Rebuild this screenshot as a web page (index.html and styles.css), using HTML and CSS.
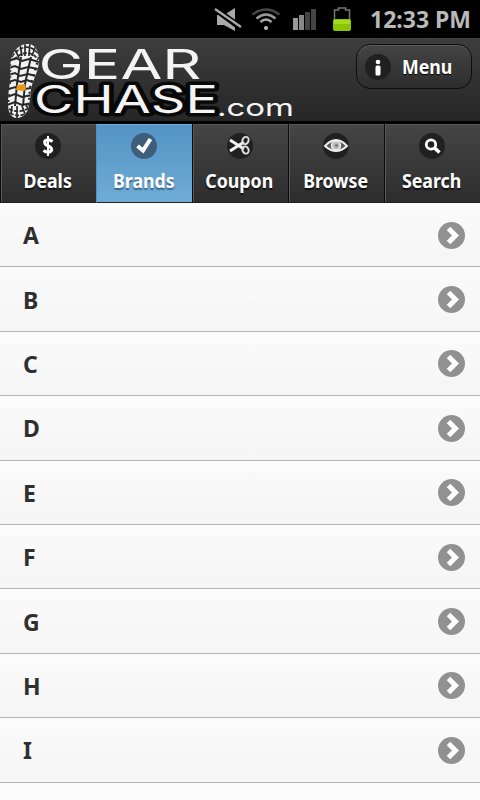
FILE: index.html
```html
<!DOCTYPE html>
<html lang="en">
<head>
    <meta charset="UTF-8">
    <meta name="viewport" content="width=device-width, initial-scale=1.0">
    <title>Brands - GearChase.com</title>
    <link rel="stylesheet" href="styles.css">
</head>
<body>
    <div class="status-bar">
        <svg class="status-icons" width="160" height="38" viewBox="0 0 160 38">
            <!-- muted speaker -->
            <g fill="#aaa">
                <path d="M17 15h7l11-7v23l-11-6h-7z"/>
                <path d="M14 8l27 20" stroke="#000" stroke-width="6"/>
                <path d="M15 9l26 18" stroke="#aaa" stroke-width="2.3"/>
            </g>
            <!-- wifi -->
            <g fill="none" stroke-width="2.4">
                <path d="M52.500 14.500q13.500-10 27 0" stroke="#484848"/>
                <path d="M56.500 18.500q9.500-8 19 0" stroke="#999"/>
                <path d="M60.500 22q5.500-5 11 0" stroke="#aaa"/>
                <circle cx="66" cy="28" r="2" fill="#bbb"/>
            </g>
            <!-- signal -->
            <path fill="#999" d="M93 18h5v12h-5z"/>
            <path fill="#888" d="M99 15h5v15h-5z"/>
            <path fill="#444" d="M105 12h5v18h-5zM111 9h5v21h-5z"/>
            <!-- battery -->
            <path d="M134.500 20V10h4V8h7v2h4v10" fill="none" stroke="#777" stroke-width="1.5"/>
            <rect x="133" y="19" width="18" height="12" rx="2" fill="#8bc400"/>
            <path d="M134 20h16v4h-16z" fill="#a3dc1b"/>
        </svg>
        <span class="clock">12:33 PM</span>
    </div>

    <div class="header">
        <svg class="logo" width="300" height="82" viewBox="0 39 300 82">
            <defs>
                <clipPath id="sole">
                    <path d="M27 44C34 43 39 50 39 60C39 69 35 76 32 85C30 91 31 97 29 105C28 113 23 118 17 118C11 118 8 112 8 104C8 95 9 89 10 82C11 73 9 65 12 56C15 49 20 44 27 44Z"/>
                </clipPath>
            </defs>
            <g clip-path="url(#sole)">
                <path fill="#f2f2f2" d="M6 42h36v78H6z"/>
                <g fill="none" stroke="#282828">
                    <path stroke-width="2" d="M9 61l7-3 6 3 7-2 10 3M9 68l6-2 6 3 7-2 10 2M8 75l7-2 5 3 8-2 8 2M8 82l7-2 6 2 6-2 8 3M8 89l8-2 8 2 8-1M7 97l8-3 7 3 10-2M7 105l8-3 7 3 10-2"/>
                    <path stroke-width="2" d="M21 57l-2 13-2 14-2 22M31 57l-3 13-3 14-2 22"/>
                    <path stroke-width="1.700" stroke-dasharray="4 1.500" d="M12 57q5-9 15-10 8 1 12 8M14 60q6-7 13-7 7 0 11 7M9 109q9 5 20-1M10 113q8 5 17 0"/>
                    <path stroke-width="1.700" d="M15 49l4 9M20 44l2 12M25 42v14M30 42l-1 14M36 45l-4 11M12 106l-1 8M17 106v12M22 106l3 8M26 105l3 5"/>
                    <path stroke-width="2.500" stroke-dasharray="2 4" d="M39 57l-9 31-1 18M10 58v22l-2 24"/>
                </g>
                <path fill="#e99a14" d="M17 85l8-1 1 5-2 2-8-1z"/>
            </g>
            <g class="logo-text">
                <text class="logo-outline" x="34" y="113" font-size="38.500" textLength="184" lengthAdjust="spacingAndGlyphs">CHASE</text>
                <text x="38.500" y="79" font-size="41" textLength="163" lengthAdjust="spacingAndGlyphs">GEAR</text>
                <text x="217" y="116" font-size="24" textLength="77" lengthAdjust="spacingAndGlyphs">.com</text>
            </g>
        </svg>
        <a class="menu-btn" href="#">
            <svg class="icon" width="26" height="26" viewBox="0 0 26 26">
                <circle cx="13" cy="13" r="13" fill="#202020"/>
                <circle cx="13" cy="8" r="2.300" fill="#fff"/>
                <rect x="10.500" y="11.500" width="5" height="10" rx="1.500" fill="#fff"/>
            </svg>
            <span>Menu</span>
        </a>
    </div>

    <div class="navbar">
        <a class="tab" href="#">
            <svg class="icon" width="26" height="26" viewBox="0 0 26 26">
                <circle cx="13" cy="13" r="13" fill="#202020"/>
                <path fill="none" stroke="#fff" stroke-width="3.200" d="M17.500 8.500Q13 5.500 10 8Q8.500 11 13 13Q18 15 16 18Q13 20.500 8.500 17.500"/>
                <path stroke="#fff" stroke-width="2" d="M13 3v20"/>
            </svg>
            <span>Deals</span>
        </a>
        <a class="tab active" href="#">
            <svg class="icon" width="26" height="26" viewBox="0 0 26 26">
                <circle cx="13" cy="13" r="13" fill="#3d5f7c"/>
                <path fill="none" stroke="#fff" stroke-width="4" d="M6.500 13l5.500 4.500L19.500 6"/>
            </svg>
            <span>Brands</span>
        </a>
        <a class="tab" href="#">
            <svg class="icon" width="26" height="26" viewBox="0 0 26 26">
                <circle cx="13" cy="13" r="13" fill="#202020"/>
                <path stroke="#f2f2f2" stroke-width="3" d="M3 7l14 9M3 18l14-9"/>
                <g fill="none" stroke="#ddd" stroke-width="2">
                    <ellipse cx="18.500" cy="7.500" rx="3" ry="3.700" transform="rotate(25 18.500 7.500)"/>
                    <ellipse cx="18.500" cy="17" rx="3" ry="3.700" transform="rotate(-25 18.500 17)"/>
                </g>
            </svg>
            <span>Coupon</span>
        </a>
        <a class="tab" href="#">
            <svg class="icon" width="26" height="26" viewBox="0 0 26 26">
                <circle cx="13" cy="13" r="13" fill="#202020"/>
                <path fill="#555" stroke="#eee" stroke-width="2" d="M2 13Q13 1 24 13Q13 23 2 13Z"/>
                <circle cx="13" cy="12.500" r="4.500" fill="#bbb" stroke="#eee" stroke-width="1.500"/>
                <circle cx="13.500" cy="12.500" r="1.500" fill="#777"/>
            </svg>
            <span>Browse</span>
        </a>
        <a class="tab" href="#">
            <svg class="icon" width="26" height="26" viewBox="0 0 26 26">
                <circle cx="13" cy="13" r="13" fill="#202020"/>
                <circle cx="12" cy="11.500" r="4.700" fill="none" stroke="#fff" stroke-width="2.800"/>
                <path stroke="#fff" stroke-width="3.600" d="M15 14.500l5.500 5"/>
            </svg>
            <span>Search</span>
        </a>
    </div>

    <svg width="0" height="0" class="defs">
        <symbol id="arrow" viewBox="0 0 27 27">
            <circle cx="13.500" cy="13.500" r="13.500" fill="#919191"/>
            <path fill="none" stroke="#fff" stroke-width="5" d="M10.500 6.500l7 7-7 7"/>
        </symbol>
    </svg>

    <ul class="list">
        <li><span>A</span><svg class="arrow"><use href="#arrow"/></svg></li>
        <li><span>B</span><svg class="arrow"><use href="#arrow"/></svg></li>
        <li><span>C</span><svg class="arrow"><use href="#arrow"/></svg></li>
        <li><span>D</span><svg class="arrow"><use href="#arrow"/></svg></li>
        <li><span>E</span><svg class="arrow"><use href="#arrow"/></svg></li>
        <li><span>F</span><svg class="arrow"><use href="#arrow"/></svg></li>
        <li><span>G</span><svg class="arrow"><use href="#arrow"/></svg></li>
        <li><span>H</span><svg class="arrow"><use href="#arrow"/></svg></li>
        <li><span>I</span><svg class="arrow"><use href="#arrow"/></svg></li>
    </ul>
</body>
</html>
```

FILE: styles.css
```css
* {
    margin: 0;
    padding: 0;
    box-sizing: border-box;
}

body {
    height: 800px;
    overflow: hidden;
    background: #fbfbfb;
    font-family: "Noto Sans", sans-serif;
    font-weight: bold;
}

a {
    color: #fff;
    text-decoration: none;
}

.status-bar {
    height: 38px;
    background: #000;
    display: flex;
    align-items: center;
    justify-content: flex-end;
    padding-right: 10px;
}

.status-icons {
    margin-right: 10px;
}

.clock {
    width: 100px;
    font-size: 23px;
    white-space: nowrap;
    color: #b9b9b9;
}

.header {
    height: 86px;
    display: flex;
    justify-content: space-between;
    align-items: flex-start;
    padding-right: 8px;
    background: linear-gradient(#3d3d3d, #262626);
    border-top: 1px solid #454545;
    border-bottom: 3px solid #000;
}

.logo-text {
    font-family: Inter, sans-serif;
    font-weight: 400;
    fill: #f4f4f4;
}

.logo-outline {
    stroke: #080808;
    stroke-width: 7px;
    stroke-linejoin: round;
    paint-order: stroke;
}

.menu-btn {
    width: 116px;
    height: 45px;
    margin-top: 5px;
    display: flex;
    align-items: center;
    padding-left: 8px;
    gap: 11px;
    border: 1px solid #0c0c0c;
    border-radius: 14px;
    background: linear-gradient(#444, #2d2d2d);
    box-shadow: inset 0 1px 0 #5c5c5c;
    font-size: 19.5px;
    text-shadow: 0 1px 1px #000;
}

.menu-btn span {
    transform: scaleX(0.91);
    transform-origin: left;
}

.navbar {
    height: 79px;
    display: flex;
    background: #1c1c1c;
}

.tab {
    flex: 1;
    display: flex;
    flex-direction: column;
    align-items: center;
    padding: 9px 2px 0 0;
    font-size: 19.5px;
    line-height: 26px;
    text-shadow: 0 2px 1px #111;
    background: linear-gradient(#454545, #2d2d2d);
    border-left: 1px solid #0c0c0c;
    border-bottom: 1px solid #222;
    box-shadow: inset 1px 1px 0 #585858;
}

.tab span {
    margin-top: 9px;
    transform: scaleX(0.91);
}

.tab.active {
    background: linear-gradient(#5393c5, #6facd5);
    border-left-color: #4b91c5;
    box-shadow: inset 0 1px 0 #75acd5;
    text-shadow: 0 2px 1px #3e6790;
}

.defs {
    position: absolute;
}

.list {
    list-style: none;
}

.list li {
    height: 64.4px;
    display: flex;
    align-items: center;
    justify-content: space-between;
    padding: 1px 15px 0 23px;
    font-size: 23px;
    color: #2f2f2f;
    text-shadow: 0 1px 0 #fff;
    background: linear-gradient(#fbfbfb, #f5f5f5);
    border-bottom: 1px solid #b3b3b3;
}

.arrow {
    width: 27px;
    height: 27px;
}
```
